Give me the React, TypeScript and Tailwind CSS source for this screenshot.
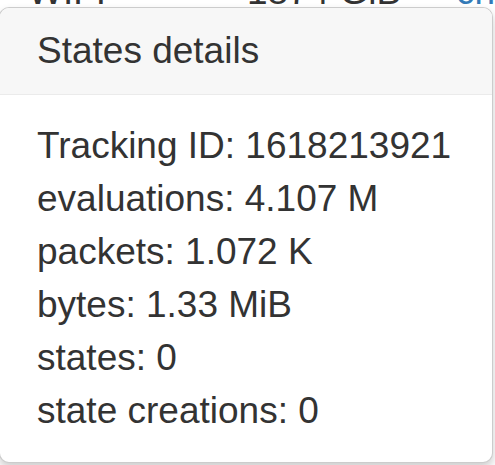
export default function App() {
  const rows = [
    'Tracking ID: 1618213921',
    'evaluations: 4.107 M',
    'packets: 1.072 K',
    'bytes: 1.33 MiB',
    'states: 0',
    'state creations: 0',
  ];

  return (
    <div className="relative h-[465px] w-[495px] overflow-hidden bg-white font-['Liberation_Sans',Arial,sans-serif] text-[#333]">
      {/* table row underneath the popover, mostly hidden */}
      <div className="-mt-[27px] flex text-[37px] leading-none">
        <span className="ml-[28px] w-[222px]">WIFI</span>
        <span className="w-[212px]">1874 GiB</span>
        <span className="text-[#337ab7]">ch</span>
      </div>

      {/* popover */}
      <div className="absolute left-[-1px] top-[7px] w-[494px] rounded-[10px] border border-black/20 bg-white shadow-[0_5px_10px_rgba(0,0,0,0.2)]">
        <h3 className="rounded-t-[9px] border-b border-[#ebebeb] bg-[#f7f7f7] px-[37px] pb-[17px] pt-[16px] text-[37px] font-normal leading-[53px]">
          States details
        </h3>
        <div className="px-[37px] pb-[25px] pt-[24px] text-[37px] leading-[53px]">
          {rows.map((r) => (
            <div key={r}>{r}</div>
          ))}
        </div>
      </div>
    </div>
  );
}
